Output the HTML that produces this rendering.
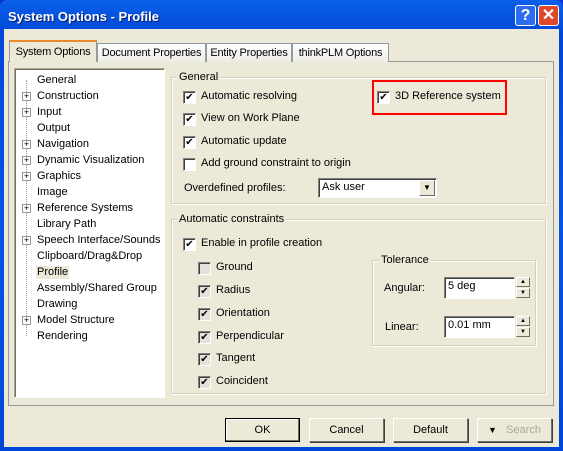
<!DOCTYPE html>
<html><head><style>
*{margin:0;padding:0;box-sizing:border-box}
body{width:563px;height:451px;overflow:hidden;background:#0831D9;font-family:Tahoma,"Liberation Sans",sans-serif;font-size:11px;color:#000}
.a{position:absolute}
#win{position:absolute;left:0;top:0;width:563px;height:451px;background:linear-gradient(#0A5FE8,#0046D8 8%,#0553E6 50%,#0046D8);border-radius:7px 7px 0 0}
#body{position:absolute;left:4px;top:29px;width:555px;height:418px;background:#ECE9D8}
.title{left:8px;top:9px;color:#fff;font-weight:bold;font-size:13px;text-shadow:1px 1px #0A1E6A}
.tb{width:21px;height:21px;top:5px;border:1px solid #fff;border-radius:3px;color:#fff;font-weight:bold;font-size:16px;text-align:center;line-height:19px}
.tab{top:43px;height:19px;border:1px solid #919B9C;border-bottom:none;background:linear-gradient(#fff,#ECEBE6);padding:3px 0 0 0;text-align:center;white-space:nowrap;letter-spacing:-0.2px}
.panel{left:8px;top:61px;width:546px;height:345px;border:1px solid #919B9C;background:#ECE9D8}
.tree{left:14px;top:68px;width:151px;height:330px;background:#fff;border:1px solid;border-color:#ACA899 #fff #fff #ACA899;box-shadow:inset 1px 1px #716F64}
.ti{left:37px;white-space:nowrap;line-height:13px}
.pl{left:22px;width:9px;height:9px;border:1px solid #919B9C;background:#fff;font-size:9px;line-height:7px;text-align:center}
.grp{border:1px solid #D0D0BF;box-shadow:inset 1px 1px #fff,1px 1px #fff}
.gl{background:#ECE9D8;padding:0 2px;line-height:12px}
.cb{width:13px;height:13px;border:1px solid;border-color:#808080 #fff #fff #808080;box-shadow:inset 1px 1px #404040;background:#fff;font-size:10px;line-height:12px;text-align:center}
.cb.g{background:#E3E1DA}
.lt{line-height:13px;white-space:nowrap}
.in{background:#fff;border:1px solid;border-color:#7F7F7F #fff #fff #7F7F7F;box-shadow:inset 1px 1px #404040;padding:1px 3px;line-height:15px}
.sp{width:14px;height:10px;background:#ECE9D8;border:1px solid;border-color:#fff #716F64 #716F64 #fff;font-size:6px;text-align:center;line-height:8px}
.btn{top:418px;width:75px;height:24px;border:1px solid;border-color:#fff #716F64 #716F64 #fff;background:#ECE9D8;text-align:center;line-height:22px;box-shadow:1px 1px #404040}
</style></head><body>
<div id="win"></div>
<div class="a title">System Options - Profile</div>
<div class="a tb" style="left:515px;background:#2C6CF0">?</div>
<div class="a tb" style="left:538px;background:#E0482A">✕</div>
<div id="body"></div>

<div class="a panel"></div>
<div class="a tab" style="left:97px;width:109px">Document Properties</div>
<div class="a tab" style="left:206px;width:86px">Entity Properties</div>
<div class="a tab" style="left:292px;width:97px">thinkPLM Options</div>
<div class="a tab" style="left:9px;top:40px;height:22px;width:88px;background:#ECE9D8;border-bottom:none;padding-top:4px;border-top:2px solid #E68B2C">System Options</div>

<div class="a tree"></div>
<div class="a" style="left:26px;top:80px;height:256px;border-left:1px dotted #A0A0A0"></div>
<div class="a ti" style="top:74px">General</div>
<div class="a ti" style="top:90px">Construction</div>
<div class="a ti" style="top:106px">Input</div>
<div class="a ti" style="top:122px">Output</div>
<div class="a ti" style="top:138px">Navigation</div>
<div class="a ti" style="top:154px">Dynamic Visualization</div>
<div class="a ti" style="top:170px">Graphics</div>
<div class="a ti" style="top:186px">Image</div>
<div class="a ti" style="top:202px">Reference Systems</div>
<div class="a ti" style="top:218px">Library Path</div>
<div class="a ti" style="top:234px">Speech Interface/Sounds</div>
<div class="a ti" style="top:250px">Clipboard/Drag&amp;Drop</div>
<div class="a ti" style="top:266px;background:#ECE9D8;padding:0 1px;left:36px">Profile</div>
<div class="a ti" style="top:282px">Assembly/Shared Group</div>
<div class="a ti" style="top:298px">Drawing</div>
<div class="a ti" style="top:314px">Model Structure</div>
<div class="a ti" style="top:330px">Rendering</div>
<div class="a pl" style="top:92px">+</div>
<div class="a pl" style="top:108px">+</div>
<div class="a pl" style="top:140px">+</div>
<div class="a pl" style="top:156px">+</div>
<div class="a pl" style="top:172px">+</div>
<div class="a pl" style="top:204px">+</div>
<div class="a pl" style="top:236px">+</div>
<div class="a pl" style="top:316px">+</div>

<div class="a grp" style="left:171px;top:77px;width:375px;height:127px"></div>
<div class="a gl" style="left:177px;top:71px">General</div>
<div class="a cb" style="left:183px;top:91px">✔</div><div class="a lt" style="left:201px;top:90px">Automatic resolving</div>
<div class="a cb" style="left:183px;top:113px">✔</div><div class="a lt" style="left:201px;top:112px">View on Work Plane</div>
<div class="a cb" style="left:183px;top:136px">✔</div><div class="a lt" style="left:201px;top:135px">Automatic update</div>
<div class="a cb" style="left:183px;top:158px"></div><div class="a lt" style="left:201px;top:157px">Add ground constraint to origin</div>
<div class="a lt" style="left:184px;top:182px">Overdefined profiles:</div>
<div class="a in" style="left:318px;top:178px;width:119px;height:20px">Ask user</div>
<div class="a sp" style="left:419px;top:180px;width:16px;height:16px;font-size:8px;line-height:14px">▼</div>
<div class="a" style="left:372px;top:80px;width:135px;height:35px;border:2px solid #F00"></div>
<div class="a cb" style="left:377px;top:91px">✔</div><div class="a lt" style="left:395px;top:90px">3D Reference system</div>

<div class="a grp" style="left:171px;top:219px;width:375px;height:175px"></div>
<div class="a gl" style="left:177px;top:213px">Automatic constraints</div>
<div class="a cb" style="left:183px;top:238px">✔</div><div class="a lt" style="left:201px;top:237px">Enable in profile creation</div>
<div class="a cb g" style="left:198px;top:262px"></div><div class="a lt" style="left:216px;top:261px">Ground</div>
<div class="a cb g" style="left:198px;top:285px">✔</div><div class="a lt" style="left:216px;top:284px">Radius</div>
<div class="a cb g" style="left:198px;top:308px">✔</div><div class="a lt" style="left:216px;top:307px">Orientation</div>
<div class="a cb g" style="left:198px;top:331px">✔</div><div class="a lt" style="left:216px;top:330px">Perpendicular</div>
<div class="a cb g" style="left:198px;top:353px">✔</div><div class="a lt" style="left:216px;top:352px">Tangent</div>
<div class="a cb g" style="left:198px;top:376px">✔</div><div class="a lt" style="left:216px;top:375px">Coincident</div>

<div class="a grp" style="left:372px;top:260px;width:164px;height:86px"></div>
<div class="a gl" style="left:379px;top:254px">Tolerance</div>
<div class="a lt" style="left:384px;top:282px">Angular:</div>
<div class="a in" style="left:444px;top:277px;width:71px;height:22px">5 deg</div>
<div class="a sp" style="left:516px;top:277px">▲</div><div class="a sp" style="left:516px;top:288px">▼</div>
<div class="a lt" style="left:385px;top:321px">Linear:</div>
<div class="a in" style="left:444px;top:316px;width:71px;height:22px">0.01 mm</div>
<div class="a sp" style="left:516px;top:316px">▲</div><div class="a sp" style="left:516px;top:327px">▼</div>

<div class="a btn" style="left:225px;border:1px solid #000;box-shadow:inset -1px -1px #716F64,inset 1px 1px #fff">OK</div>
<div class="a btn" style="left:309px">Cancel</div>
<div class="a btn" style="left:393px">Default</div>
<div class="a btn" style="left:477px;color:#ACA899"><span style="color:#000;font-size:9px">▼</span>&nbsp;&nbsp; Search</div>
</body></html>
